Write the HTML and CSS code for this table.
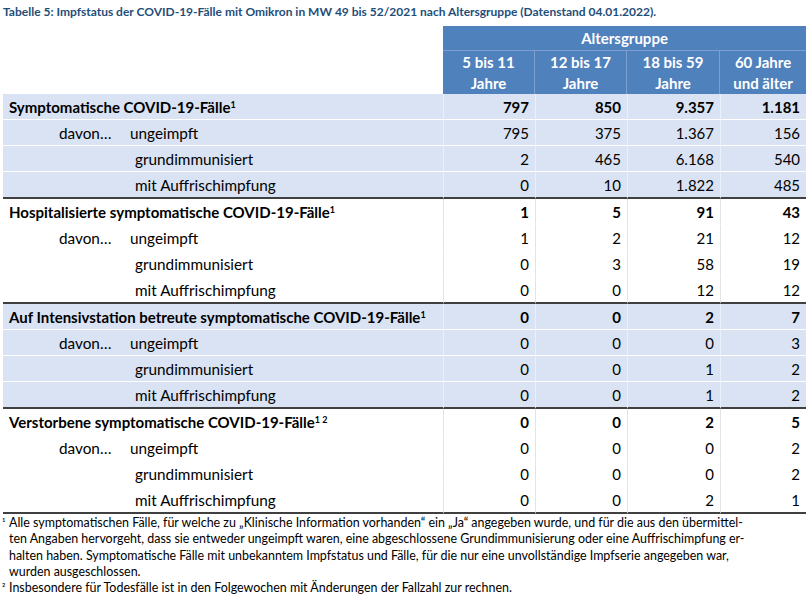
FILE: index.html
```html
<!DOCTYPE html>
<html lang="de">
<head>
<meta charset="utf-8">
<title>Tabelle 5</title>
<link rel="stylesheet" href="styles.css">
</head>
<body>
<div class="page">
  <h1 class="title">Tabelle 5: Impfstatus der COVID-19-Fälle mit Omikron in MW 49 bis 52/2021 nach Altersgruppe (Datenstand 04.01.2022).</h1>
  <table class="tbl">
    <colgroup>
      <col class="c-label"><col class="c-num"><col class="c-num"><col class="c-num3"><col class="c-num4">
    </colgroup>
    <thead>
      <tr class="h1">
        <th class="blank"></th>
        <th class="group" colspan="4">Altersgruppe</th>
      </tr>
      <tr class="h2">
        <th class="blank"></th>
        <th class="sub">5 bis 11<br>Jahre</th>
        <th class="sub">12 bis 17<br>Jahre</th>
        <th class="sub">18 bis 59<br>Jahre</th>
        <th class="sub last">60 Jahre<br>und älter</th>
      </tr>
    </thead>
    <tbody class="sec blue">
      <tr class="main"><td class="lbl">Symptomatische COVID-19-Fälle<sup>1</sup></td><td>797</td><td>850</td><td>9.357</td><td>1.181</td></tr>
      <tr><td class="lbl davon"><span class="dv">davon…</span>ungeimpft</td><td>795</td><td>375</td><td>1.367</td><td>156</td></tr>
      <tr><td class="lbl sub2">grundimmunisiert</td><td>2</td><td>465</td><td>6.168</td><td>540</td></tr>
      <tr class="end"><td class="lbl sub2">mit Auffrischimpfung</td><td>0</td><td>10</td><td>1.822</td><td>485</td></tr>
    </tbody>
    <tbody class="sec white">
      <tr class="main"><td class="lbl">Hospitalisierte symptomatische COVID-19-Fälle<sup>1</sup></td><td>1</td><td>5</td><td>91</td><td>43</td></tr>
      <tr><td class="lbl davon"><span class="dv">davon…</span>ungeimpft</td><td>1</td><td>2</td><td>21</td><td>12</td></tr>
      <tr><td class="lbl sub2">grundimmunisiert</td><td>0</td><td>3</td><td>58</td><td>19</td></tr>
      <tr class="end"><td class="lbl sub2">mit Auffrischimpfung</td><td>0</td><td>0</td><td>12</td><td>12</td></tr>
    </tbody>
    <tbody class="sec blue">
      <tr class="main"><td class="lbl">Auf Intensivstation betreute symptomatische COVID-19-Fälle<sup>1</sup></td><td>0</td><td>0</td><td>2</td><td>7</td></tr>
      <tr><td class="lbl davon"><span class="dv">davon…</span>ungeimpft</td><td>0</td><td>0</td><td>0</td><td>3</td></tr>
      <tr><td class="lbl sub2">grundimmunisiert</td><td>0</td><td>0</td><td>1</td><td>2</td></tr>
      <tr class="end"><td class="lbl sub2">mit Auffrischimpfung</td><td>0</td><td>0</td><td>1</td><td>2</td></tr>
    </tbody>
    <tbody class="sec white">
      <tr class="main"><td class="lbl">Verstorbene symptomatische COVID-19-Fälle<sup>1 2</sup></td><td>0</td><td>0</td><td>2</td><td>5</td></tr>
      <tr><td class="lbl davon"><span class="dv">davon…</span>ungeimpft</td><td>0</td><td>0</td><td>0</td><td>2</td></tr>
      <tr><td class="lbl sub2">grundimmunisiert</td><td>0</td><td>0</td><td>0</td><td>2</td></tr>
      <tr class="end"><td class="lbl sub2">mit Auffrischimpfung</td><td>0</td><td>0</td><td>2</td><td>1</td></tr>
    </tbody>
  </table>
  <div class="notes">
    <div class="note"><span class="mark">¹</span><p>Alle symptomatischen Fälle, für welche zu „Klinische Information vorhanden“ ein „Ja“ angegeben wurde, und für die aus den übermittel-<br>ten Angaben hervorgeht, dass sie entweder ungeimpft waren, eine abgeschlossene Grundimmunisierung oder eine Auffrischimpfung er-<br>halten haben. Symptomatische Fälle mit unbekanntem Impfstatus und Fälle, für die nur eine unvollständige Impfserie angegeben war,<br>wurden ausgeschlossen.</p></div>
    <div class="note"><span class="mark">²</span><p>Insbesondere für Todesfälle ist in den Folgewochen mit Änderungen der Fallzahl zur rechnen.</p></div>
  </div>
</div>
</body>
</html>
```

FILE: styles.css
```css
html, body {
  margin: 0;
  padding: 0;
  background: #ffffff;
}

.page {
  padding: 0 0 0 3px;
  font-family: "Lato", "Liberation Sans", sans-serif;
  color: #000000;
}

.title {
  margin: 0;
  height: 26px;
  padding-top: 4px;
  box-sizing: border-box;
  font-size: 12px;
  line-height: 16px;
  font-weight: 700;
  color: #1f4e79;
  white-space: nowrap;
}

.tbl {
  width: 803px;
  border-collapse: separate;
  border-spacing: 0;
  table-layout: fixed;
  font-size: 15px;
}

.c-label { width: 440px; }
.c-num { width: 92px; }
.c-num3 { width: 93px; }
.c-num4 { width: 86px; }

.tbl th, .tbl td {
  padding: 0;
  box-sizing: border-box;
}

.blank {
  background: #ffffff;
}

.group {
  background: #4f81bd;
  color: #ffffff;
  font-weight: 700;
  height: 25px;
  line-height: 20px;
  text-align: center;
  border-bottom: 1px solid #7d9fd0;
}

.h2 .sub {
  background: #4f81bd;
  color: #ffffff;
  font-weight: 700;
  height: 43px;
  line-height: 21px;
  text-align: center;
  border-right: 1px solid #7d9fd0;
  padding-top: 1px;
}

.h2 .sub.last {
  border-right: 0;
}

.sec td {
  height: 26px;
  line-height: 20px;
  text-align: right;
  padding-right: 6px;
  vertical-align: middle;
}

.sec td + td {
  border-left: 1px solid #e4e4e4;
}

.sec.blue td {
  background: #dae3f3;
  border-bottom: 1px solid #ffffff;
}

.sec.blue td + td {
  border-left: 1px solid #eaf0f9;
}

.sec.white td {
  background: #ffffff;
  border-bottom: 1px solid #ffffff;
}

.sec tr.end td {
  height: 27px;
  border-bottom: 2px solid #404040;
}

.sec td.lbl {
  text-align: left;
  padding-right: 0;
  padding-left: 6px;
  white-space: nowrap;
  font-size: 15.3px;
}

.sec tr.main td {
  font-weight: 700;
}

.sec tr.main td.lbl {
  font-size: 15px;
}

.sec td.lbl.davon {
  padding-left: 56px;
}

.dv {
  display: inline-block;
  width: 71px;
}

.sec td.lbl.sub2 {
  padding-left: 132px;
}

sup {
  font-size: 9px;
  line-height: 0;
  vertical-align: 5px;
  font-weight: 700;
}

.notes {
  padding-top: 1px;
  font-size: 12.45px;
  line-height: 16.3px;
}

.note {
  display: flex;
}

.mark {
  width: 7px;
  flex: none;
  font-size: 10px;
  margin-left: -1px;
  line-height: 14px;
}

.note p {
  margin: 0;
  white-space: nowrap;
}
```
